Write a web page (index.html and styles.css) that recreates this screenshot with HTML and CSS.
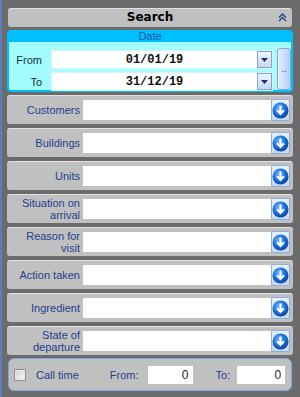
FILE: index.html
```html
<!DOCTYPE html>
<html lang="en">
<head>
    <meta charset="UTF-8">
    <title>Search</title>
    <link rel="stylesheet" href="styles.css">
</head>
<body>
<div class="panel">

    <div class="search-bar">
        <span>Search</span>
        <svg class="collapse" width="9" height="9" viewBox="0 0 9 9">
            <path d="M1 4.5l3.5-3.5 3.5 3.5M1 8l3.5-3.5 3.5 3.5" fill="none" stroke="#2b4b8c" stroke-width="1.5"/>
        </svg>
    </div>

    <div class="date-box">
        <div class="date-title">Date</div>
        <div class="date-body">
            <div class="date-fields">
                <div class="date-row">
                    <label>From</label>
                    <div class="date-input">
                        <span class="date-value">01/01/19</span>
                        <span class="drop"><svg width="7" height="4" viewBox="0 0 7 4"><path d="M0 0h7L3.5 4z" fill="#1c2f6a"/></svg></span>
                    </div>
                </div>
                <div class="date-row">
                    <label>To</label>
                    <div class="date-input">
                        <span class="date-value">31/12/19</span>
                        <span class="drop"><svg width="7" height="4" viewBox="0 0 7 4"><path d="M0 0h7L3.5 4z" fill="#1c2f6a"/></svg></span>
                    </div>
                </div>
            </div>
            <button class="dots">..</button>
        </div>
    </div>

    <div class="filter">
        <div class="filter-label">Customers</div>
        <div class="filter-input"></div>
        <button class="pick"><svg width="17" height="17" viewBox="0 0 17 17"><circle cx="8.5" cy="8.5" r="8" fill="url(#ball)"/><path d="M8.5 3.5v8M5 8.2l3.5 3.6 3.5-3.6" fill="none" stroke="#fff" stroke-width="2.2"/></svg></button>
    </div>
    <div class="filter">
        <div class="filter-label">Buildings</div>
        <div class="filter-input"></div>
        <button class="pick"><svg width="17" height="17" viewBox="0 0 17 17"><circle cx="8.5" cy="8.5" r="8" fill="url(#ball)"/><path d="M8.5 3.5v8M5 8.2l3.5 3.6 3.5-3.6" fill="none" stroke="#fff" stroke-width="2.2"/></svg></button>
    </div>
    <div class="filter">
        <div class="filter-label">Units</div>
        <div class="filter-input"></div>
        <button class="pick"><svg width="17" height="17" viewBox="0 0 17 17"><circle cx="8.5" cy="8.5" r="8" fill="url(#ball)"/><path d="M8.5 3.5v8M5 8.2l3.5 3.6 3.5-3.6" fill="none" stroke="#fff" stroke-width="2.2"/></svg></button>
    </div>
    <div class="filter">
        <div class="filter-label">Situation on<br>arrival</div>
        <div class="filter-input"></div>
        <button class="pick"><svg width="17" height="17" viewBox="0 0 17 17"><circle cx="8.5" cy="8.5" r="8" fill="url(#ball)"/><path d="M8.5 3.5v8M5 8.2l3.5 3.6 3.5-3.6" fill="none" stroke="#fff" stroke-width="2.2"/></svg></button>
    </div>
    <div class="filter">
        <div class="filter-label">Reason for<br>visit</div>
        <div class="filter-input"></div>
        <button class="pick"><svg width="17" height="17" viewBox="0 0 17 17"><circle cx="8.5" cy="8.5" r="8" fill="url(#ball)"/><path d="M8.5 3.5v8M5 8.2l3.5 3.6 3.5-3.6" fill="none" stroke="#fff" stroke-width="2.2"/></svg></button>
    </div>
    <div class="filter">
        <div class="filter-label">Action taken</div>
        <div class="filter-input"></div>
        <button class="pick"><svg width="17" height="17" viewBox="0 0 17 17"><circle cx="8.5" cy="8.5" r="8" fill="url(#ball)"/><path d="M8.5 3.5v8M5 8.2l3.5 3.6 3.5-3.6" fill="none" stroke="#fff" stroke-width="2.2"/></svg></button>
    </div>
    <div class="filter">
        <div class="filter-label">Ingredient</div>
        <div class="filter-input"></div>
        <button class="pick"><svg width="17" height="17" viewBox="0 0 17 17"><circle cx="8.5" cy="8.5" r="8" fill="url(#ball)"/><path d="M8.5 3.5v8M5 8.2l3.5 3.6 3.5-3.6" fill="none" stroke="#fff" stroke-width="2.2"/></svg></button>
    </div>
    <div class="filter">
        <div class="filter-label">State of<br>departure</div>
        <div class="filter-input"></div>
        <button class="pick"><svg width="17" height="17" viewBox="0 0 17 17"><circle cx="8.5" cy="8.5" r="8" fill="url(#ball)"/><path d="M8.5 3.5v8M5 8.2l3.5 3.6 3.5-3.6" fill="none" stroke="#fff" stroke-width="2.2"/></svg></button>
    </div>

    <div class="call-time">
        <span class="check"></span>
        <span class="call-label">Call time</span>
        <span class="from-label">From:</span>
        <span class="num-input from-input">0</span>
        <span class="to-label">To:</span>
        <span class="num-input to-input">0</span>
    </div>

</div>

<!-- общий градиент для синих кнопок -->
<svg width="0" height="0" style="position:absolute">
    <defs>
        <radialGradient id="ball" cx="0.4" cy="0.35" r="0.7">
            <stop offset="0" stop-color="#6fb6ff"/>
            <stop offset="0.55" stop-color="#1a6fd8"/>
            <stop offset="1" stop-color="#083f9a"/>
        </radialGradient>
    </defs>
</svg>
</body>
</html>
```

FILE: styles.css
```css
/* Общие стили */
html, body {
    margin: 0;
    padding: 0;
    background-color: #6b6b6b;
    font-family: "Liberation Sans", Arial, sans-serif;
    font-size: 11px;
}

.panel {
    width: 300px;
    height: 397px;
    box-sizing: border-box;
    border-left: 2px solid #5d7dba;
    padding: 8px 7px 0 5px;
}

/* Заголовок */
.search-bar {
    position: relative;
    height: 19px;
    margin: 0 1px;
    background-color: #c0c0c0;
    border-top: 1px solid #e0e0e0;
    border-radius: 3px;
    box-sizing: border-box;
    text-align: center;
    font-family: "DejaVu Sans", sans-serif;
    font-weight: bold;
    font-size: 12px;
    line-height: 17px;
    color: #000000;
}

.collapse {
    position: absolute;
    right: 5px;
    top: 4px;
}

/* Блок даты */
.date-box {
    height: 62px;
    margin-top: 3px;
    box-sizing: border-box;
    border: 2px solid #00bfff;
    border-radius: 4px;
    background-color: #a4fcff;
}

.date-title {
    height: 10px;
    background-color: #00bfff;
    color: #1c4fa8;
    text-align: center;
    line-height: 8px;
}

.date-body {
    display: flex;
    padding-top: 6px;
}

.date-fields {
    display: flex;
    flex-direction: column;
    gap: 3px;
    padding-top: 2px;
}

.date-row {
    display: flex;
    align-items: center;
    height: 19px;
}

.date-row label {
    width: 33px;
    padding-right: 9px;
    text-align: right;
    color: #123434;
}

.date-input {
    display: flex;
    align-items: center;
    width: 222px;
    height: 19px;
    box-sizing: border-box;
    border: 1px solid #d4f4f8;
    background-color: #ffffff;
}

.date-value {
    flex: 1;
    text-align: center;
    font-family: "Liberation Mono", monospace;
    font-weight: bold;
    font-size: 12px;
    color: #101010;
}

.drop {
    display: flex;
    align-items: center;
    justify-content: center;
    width: 15px;
    height: 17px;
    box-sizing: border-box;
    border: 1px solid #8aa2c4;
    background: linear-gradient(#f0f5ff, #c6d8f4);
}

.dots {
    width: 14px;
    height: 42px;
    margin-left: 4px;
    padding: 0;
    border: 1px solid #8aa6d0;
    border-radius: 3px;
    background: linear-gradient(to right, #e6efff, #b4cdf3);
    color: #46587c;
    font-family: "Liberation Sans", sans-serif;
    font-size: 10px;
    line-height: 10px;
}

/* Строки фильтров */
.filter {
    display: flex;
    align-items: center;
    height: 29px;
    margin-top: 4px;
    padding-right: 3px;
    box-sizing: border-box;
    background-color: #c0c0c0;
    border-top: 1px solid #e2e2e2;
    border-radius: 3px;
}

.date-box + .filter {
    margin-top: 3px;
}

.filter-label {
    width: 73px;
    text-align: right;
    line-height: 12px;
    color: #233f8f;
}

.filter-input {
    flex: 1;
    height: 20px;
    margin-left: 3px;
    background-color: #ffffff;
}

.pick {
    display: flex;
    align-items: center;
    justify-content: center;
    width: 19px;
    height: 22px;
    padding: 0;
    box-sizing: border-box;
    border: 1px solid #8eaedb;
    border-radius: 2px;
    background: linear-gradient(#e8f0fd, #c6d9f5);
}

/* Время звонка */
.call-time {
    display: flex;
    align-items: center;
    height: 33px;
    margin: 3px 1px 0 1px;
    padding-left: 5px;
    box-sizing: border-box;
    border: 1px solid #7ea6e0;
    border-radius: 6px;
    background-color: #c0c0c0;
    color: #233f8f;
}

.check {
    width: 12px;
    height: 12px;
    box-sizing: border-box;
    border: 1px solid #8e8f8f;
    background: linear-gradient(135deg, #d4d4d4, #f6f6f6);
    box-shadow: inset 0 0 0 1px #e8e8e8;
}

.call-label {
    margin-left: 10px;
}

.from-label {
    margin-left: 31px;
}

.num-input {
    height: 18px;
    padding-right: 4px;
    box-sizing: border-box;
    background-color: #ffffff;
    text-align: right;
    line-height: 18px;
    font-size: 12px;
    color: #1a1a44;
}

.from-input {
    width: 45px;
    margin-left: 9px;
}

.to-label {
    margin-left: 23px;
}

.to-input {
    width: 48px;
    margin-left: 7px;
}
```
